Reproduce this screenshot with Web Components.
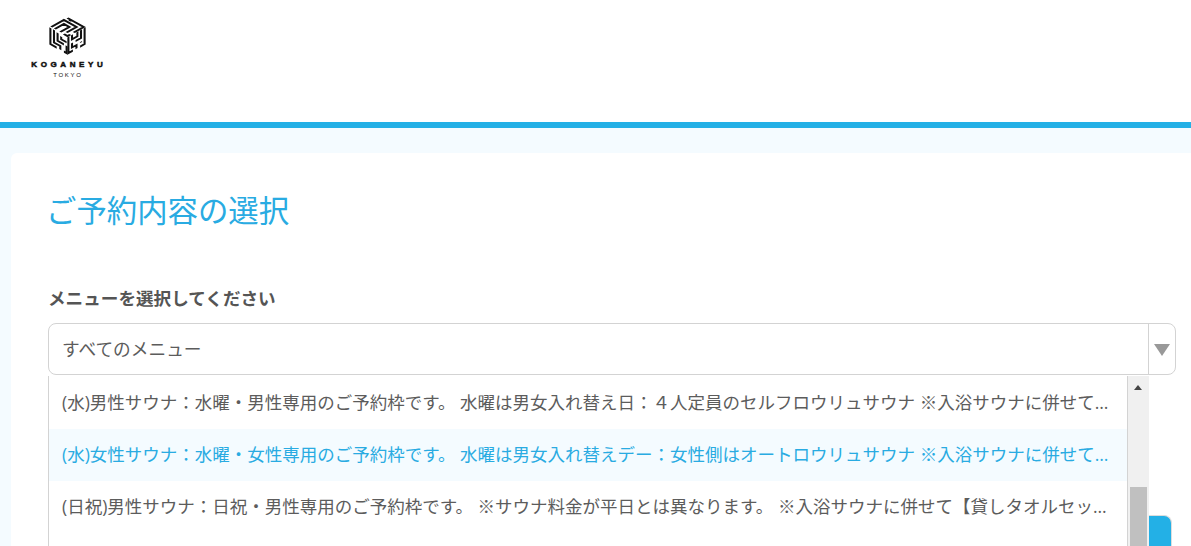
<!DOCTYPE html>
<html lang="ja">
<head>
<meta charset="utf-8">
<title>ご予約内容の選択</title>
<style>
  html, body { margin: 0; height: 100%; overflow: hidden; }
  body { background: #f4fbff; font-family: "Open Sans", "Noto Sans CJK JP", sans-serif; color: #555; }
</style>
</head>
<body>
<site-header></site-header>
<booking-card heading="ご予約内容の選択">
  <menu-select label="メニューを選択してください" value="すべてのメニュー">
    <menu-option>(水)男性サウナ：水曜・男性専用のご予約枠です。 水曜は男女入れ替え日：４人定員のセルフロウリュサウナ ※入浴サウナに併せて【貸しタオルセット】をご利用いただけます</menu-option>
    <menu-option active>(水)女性サウナ：水曜・女性専用のご予約枠です。 水曜は男女入れ替えデー：女性側はオートロウリュサウナ ※入浴サウナに併せて【貸しタオルセット】をご利用いただけます</menu-option>
    <menu-option>(日祝)男性サウナ：日祝・男性専用のご予約枠です。 ※サウナ料金が平日とは異なります。 ※入浴サウナに併せて【貸しタオルセット】をご利用いただけます</menu-option>
  </menu-select>
</booking-card>

<script>
class SiteHeader extends HTMLElement {
  constructor() {
    super();
    this.attachShadow({ mode: 'open' });
    // logo cube: the same 10x10 maze grid skewed onto each of the three faces
    this.shadowRoot.innerHTML = `
      <style>
        :host { display: block; height: 122px; background: #fff; border-bottom: 6px solid #23b0e6; }
        .logo { display: flex; flex-direction: column; align-items: center; width: 74px; padding: 17px 0 0 30px; color: #111; }
        svg { display: block; }
        .name { font: 700 8px/8px "Liberation Sans", sans-serif; letter-spacing: 3.6px; margin: 6px -3.6px 0 0; white-space: nowrap; -webkit-text-stroke: .5px #111; }
        .city { font: 400 6px/6px "Liberation Sans", sans-serif; letter-spacing: 1.7px; margin: 3px -1.7px 0 0; }
      </style>
      <div class="logo">
        <svg width="37" height="38" viewBox="0 0 36 38" fill="none" stroke="#111" stroke-width="1.15">
          <g transform="matrix(1.8 1 -1.8 1 18 0)">
            <path d="M.5 .5H9.500V6M.5 9.500V2.500H7.500V8M2.500 9.500V4.500H5.500V9.500M9.500 8V9.500H7.500M2.500 .5V1.500"/>
          </g>
          <g transform="matrix(1.8 1 0 1.8 0 9.500)">
            <path d="M.5 .5V9.500H4M2.500 .5V7.500H6V9.500M4.500 1V5.500H8M6.500 2V3.500H9.500M8 9.500H9.500V5.500"/>
          </g>
          <g transform="matrix(1.8 -1 0 1.8 18 19.500)">
            <path d="M.5 .5V9.500H3M2.500 .5V3H5.500V.5M2.500 5V7.500H5V9.500M7.500 .5V5H4.500M9.500 .5V9.500H7M7.500 7V7.500"/>
          </g>
        </svg>
        <div class="name">KOGANEYU</div>
        <div class="city">TOKYO</div>
      </div>`;
  }
}

class BookingCard extends HTMLElement {
  constructor() {
    super();
    this.attachShadow({ mode: 'open' });
    this.shadowRoot.innerHTML = `
      <style>
        :host { display: block; margin: 25px 0 0 11px; background: #fff; border-radius: 6px 0 0 0; padding: 36px 15px 0 37px; height: 400px; }
        h2 { margin: 0 0 52px -2px; font-weight: 400; font-size: 30.4px; line-height: 44px; color: #29abe2; }
      </style>
      <h2></h2>
      <slot></slot>`;
    this.shadowRoot.querySelector('h2').textContent = this.getAttribute('heading');
  }
}

class MenuSelect extends HTMLElement {
  constructor() {
    super();
    this.attachShadow({ mode: 'open' });
    this.shadowRoot.innerHTML = `
      <style>
        :host { display: block; position: relative; }
        .label { font-weight: 700; font-size: 17.6px; line-height: 26px; color: #555; margin-bottom: 12px; }
        .box { display: flex; height: 50px; border: 1px solid #d3d3d3; border-radius: 8px; background: #fff; }
        .value { flex: 1; padding-left: 13px; font-size: 17.7px; line-height: 50px; color: #5c5c5c; }
        .arrow { width: 26px; border-left: 1px solid #d3d3d3; display: flex; align-items: center; justify-content: center; }
        .arrow i { border: 8px solid transparent; border-top: 12px solid #999; border-bottom: 0; margin-top: 2px; }
        .list { position: absolute; left: 0; top: 91px; width: 1100px; height: 400px; display: flex; background: #fff; border-left: 1px solid #d3d3d3; }
        .items { flex: 1; min-width: 0; padding-top: 1px; }
        .bar { width: 21px; background: #f0f0f0; border-left: 1px solid #d3d3d3; position: relative; }
        .bar b { position: absolute; left: 6px; top: 9px; border: 4.500px solid transparent; border-bottom: 5px solid #444; border-top: 0; }
        .bar u { position: absolute; left: 2px; top: 111px; width: 17px; height: 200px; background: #c0c0c0; }
        .submit { position: absolute; left: 1101px; top: 230px; width: 23px; height: 60px; background: #23b0e6; border-radius: 0 8px 0 0; border: 1px solid #ddd; border-left: 0; border-bottom: 0; box-sizing: border-box; }
      </style>
      <div class="label"></div>
      <div class="box"><div class="value"></div><div class="arrow"><i></i></div></div>
      <div class="submit"></div>
      <div class="list">
        <div class="items"><slot></slot></div>
        <div class="bar"><b></b><u></u></div>
      </div>`;
    this.shadowRoot.querySelector('.label').textContent = this.getAttribute('label');
    this.shadowRoot.querySelector('.value').textContent = this.getAttribute('value');
  }
}

class MenuOption extends HTMLElement {
  constructor() {
    super();
    this.attachShadow({ mode: 'open' });
    this.shadowRoot.innerHTML = `
      <style>
        :host { display: block; height: 52px; line-height: 50px; padding: 0 14px 0 13px; font-size: 17.5px; color: #5c5c5c;
          white-space: nowrap; overflow: hidden; text-overflow: ellipsis; }
        :host([active]) { background: #f4fbff; color: #29abe2; }
      </style>
      <slot></slot>`;
  }
}

customElements.define('site-header', SiteHeader);
customElements.define('booking-card', BookingCard);
customElements.define('menu-select', MenuSelect);
customElements.define('menu-option', MenuOption);
</script>
</body>
</html>
